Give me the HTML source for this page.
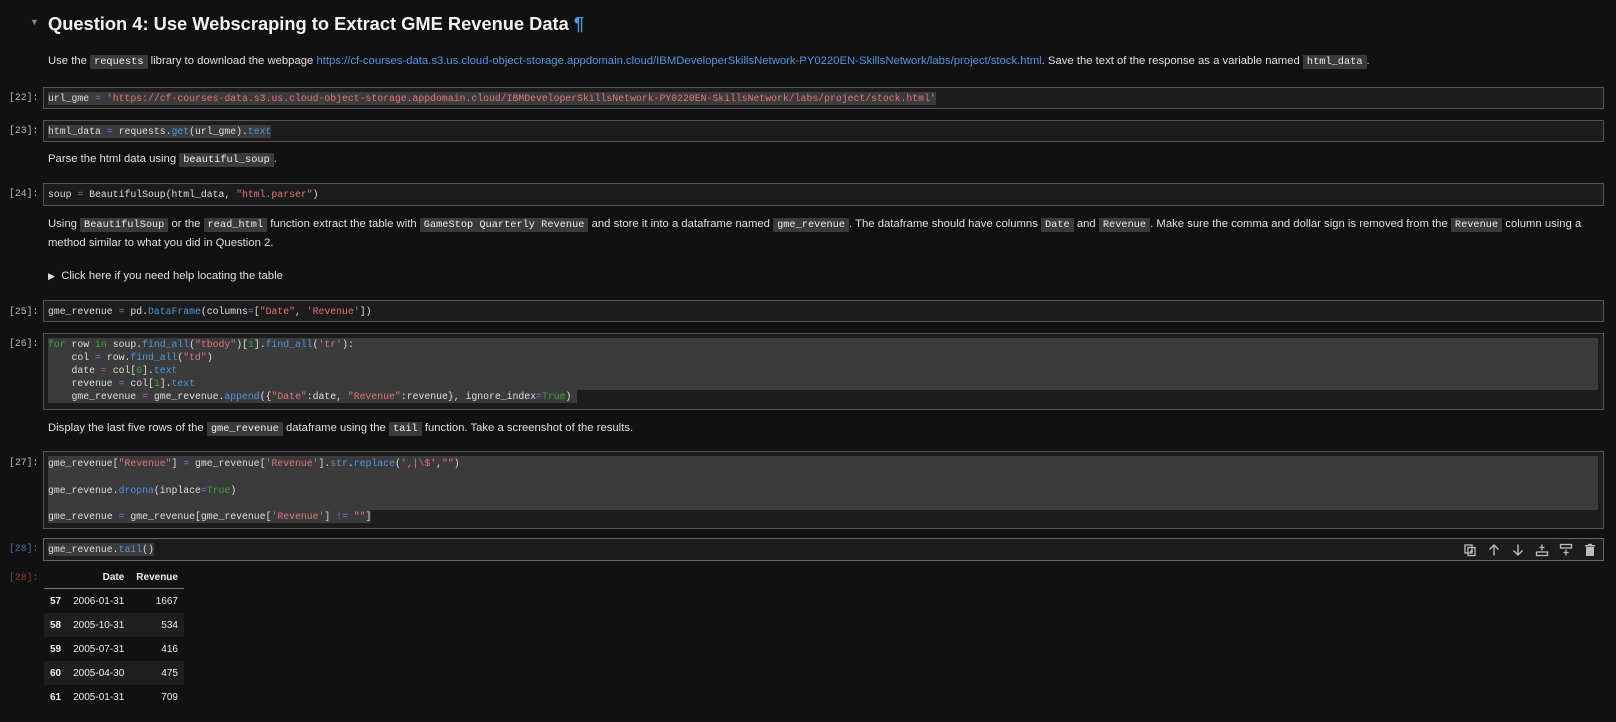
<!DOCTYPE html>
<html><head><meta charset="utf-8"><style>
html,body{margin:0;padding:0;background:#111111;width:1616px;height:722px;overflow:hidden;color:#e0e0e0;font-family:"Liberation Sans",sans-serif;}
.a{position:absolute;white-space:pre;}
.t{font-size:11.3px;line-height:16px;}
.ic{background:#3a3a3a;padding:1px 4px;font-family:"Liberation Mono",monospace;font-size:10.3px;color:#eee;}
.box{position:absolute;left:43px;width:1561px;border:1px solid #555;background:#1c1c1c;box-sizing:border-box;}
.lbl{position:absolute;left:9px;font-family:"Liberation Mono",monospace;font-size:9.8px;color:#bbb;}
.ln{position:absolute;left:4px;height:13px;line-height:13px;font-family:"Liberation Mono",monospace;font-size:9.8px;color:#ddd;white-space:pre;}
.hl{background:#3b3b3b;}
.s{color:#e0757a}.o{color:#a55fd6}.b{color:#4f96de}.g{color:#3ea43e}
a{color:#4f96de;text-decoration:none}
table{position:absolute;left:44px;top:566px;border-collapse:collapse;font-size:10px;color:#eee;}
td,th{padding:0 6px;height:24px;text-align:right;}
th{font-weight:bold;height:22px;border-bottom:1px solid #777;}
tr.st td{background:#1f1f1f}
.icn{position:absolute;top:4px;width:14px;height:14px;}
</style></head><body>
<div class="a" style="left:30px;top:17px;color:#888;font-size:9px;">▼</div>
<div class="a" style="left:48px;top:13px;font-size:18.3px;font-weight:bold;color:#f2f2f2;">Question 4: Use Webscraping to Extract GME Revenue Data <span style="color:#4f96de">¶</span></div>
<div class="a t" style="left:48px;top:53px;">Use the <span class="ic">requests</span> library to download the webpage <a>https://cf-courses-data.s3.us.cloud-object-storage.appdomain.cloud/IBMDeveloperSkillsNetwork-PY0220EN-SkillsNetwork/labs/project/stock.html</a>. Save the text of the response as a variable named <span class="ic">html_data</span>.</div>

<div class="lbl" style="top:92px">[22]:</div>
<div class="box" style="top:87px;height:22px"><div class="ln hl" style="top:4px">url_gme <span class="o">=</span> <span class="s">'https://cf-courses-data.s3.us.cloud-object-storage.appdomain.cloud/IBMDeveloperSkillsNetwork-PY0220EN-SkillsNetwork/labs/project/stock.html'</span></div></div>

<div class="lbl" style="top:125px">[23]:</div>
<div class="box" style="top:120px;height:22px"><div class="ln hl" style="top:4px">html_data <span class="o">=</span> requests.<span class="b">get</span>(url_gme).<span class="b">text</span></div></div>

<div class="a t" style="left:48px;top:151px;">Parse the html data using <span class="ic">beautiful_soup</span>.</div>

<div class="lbl" style="top:188px">[24]:</div>
<div class="box" style="top:183px;height:23px"><div class="ln" style="top:4px">soup <span class="o">=</span> BeautifulSoup(html_data, <span class="s">"html.parser"</span>)</div></div>

<div class="a t" style="left:48px;top:216px;">Using <span class="ic">BeautifulSoup</span> or the <span class="ic">read_html</span> function extract the table with <span class="ic">GameStop Quarterly Revenue</span> and store it into a dataframe named <span class="ic">gme_revenue</span>. The dataframe should have columns <span class="ic">Date</span> and <span class="ic">Revenue</span>. Make sure the comma and dollar sign is removed from the <span class="ic">Revenue</span> column using a</div>
<div class="a t" style="left:48px;top:235px;">method similar to what you did in Question 2.</div>
<div class="a t" style="left:48px;top:268px;"><span style="font-size:9px">▶</span>  Click here if you need help locating the table</div>

<div class="lbl" style="top:306px">[25]:</div>
<div class="box" style="top:300px;height:22px"><div class="ln" style="top:4px">gme_revenue <span class="o">=</span> pd.<span class="b">DataFrame</span>(columns<span class="o">=</span>[<span class="s">"Date"</span>, <span class="s">'Revenue'</span>])</div></div>

<div class="lbl" style="top:338px">[26]:</div>
<div class="box" style="top:333px;height:77px">
<div style="position:absolute;left:4px;top:4px;width:1550px;height:52px;background:#3b3b3b"></div>
<div class="ln" style="top:4px"><span class="g">for</span> row <span class="g">in</span> soup.<span class="b">find_all</span>(<span class="s">"tbody"</span>)[<span class="g">1</span>].<span class="b">find_all</span>(<span class="s">'tr'</span>):</div>
<div class="ln" style="top:17px">    col <span class="o">=</span> row.<span class="b">find_all</span>(<span class="s">"td"</span>)</div>
<div class="ln" style="top:30px">    date <span class="o">=</span> col[<span class="g">0</span>].<span class="b">text</span></div>
<div class="ln" style="top:43px">    revenue <span class="o">=</span> col[<span class="g">1</span>].<span class="b">text</span></div>
<div class="ln hl" style="top:56px">    gme_revenue <span class="o">=</span> gme_revenue.<span class="b">append</span>({<span class="s">"Date"</span>:date, <span class="s">"Revenue"</span>:revenue}, ignore_index<span class="o">=</span><span class="g">True</span>) </div>
</div>

<div class="a t" style="left:48px;top:420px;">Display the last five rows of the <span class="ic">gme_revenue</span> dataframe using the <span class="ic">tail</span> function. Take a screenshot of the results.</div>

<div class="lbl" style="top:457px">[27]:</div>
<div class="box" style="top:451px;height:78px">
<div style="position:absolute;left:4px;top:4px;width:1550px;height:54px;background:#3b3b3b"></div>
<div class="ln" style="top:5px">gme_revenue[<span class="s">"Revenue"</span>] <span class="o">=</span> gme_revenue[<span class="s">'Revenue'</span>].<span class="b">str</span>.<span class="b">replace</span>(<span class="s">',|\$'</span>,<span class="s">""</span>)</div>
<div class="ln" style="top:32px">gme_revenue.<span class="b">dropna</span>(inplace<span class="o">=</span><span class="g">True</span>)</div>
<div class="ln hl" style="top:58px">gme_revenue <span class="o">=</span> gme_revenue[gme_revenue[<span class="s">'Revenue'</span>] <span class="o">!=</span> <span class="s">""</span>]</div>
</div>

<div class="lbl" style="top:543px;color:#3f6fb0">[28]:</div>
<div class="box" style="top:538px;height:23px;border-color:#666">
<div class="ln hl" style="top:4px">gme_revenue.<span class="b">tail</span>()</div>
<svg class="icn" style="left:1419px" viewBox="0 0 14 14" fill="none" stroke="#bbb" stroke-width="1.3"><rect x="2" y="2" width="7" height="8"/><rect x="5" y="4.5" width="7" height="8"/><path d="M8.5 7v3M7 8.5h3"/></svg>
<svg class="icn" style="left:1443px" viewBox="0 0 14 14" fill="none" stroke="#bbb" stroke-width="1.4"><path d="M7 12.5V2M2.5 6.5L7 2l4.5 4.5"/></svg>
<svg class="icn" style="left:1467px" viewBox="0 0 14 14" fill="none" stroke="#bbb" stroke-width="1.4"><path d="M7 1.5V12M2.5 7.5L7 12l4.5-4.5"/></svg>
<svg class="icn" style="left:1491px" viewBox="0 0 14 14" fill="none" stroke="#bbb" stroke-width="1.3"><rect x="1.5" y="9" width="11" height="3.5"/><path d="M7 1.5v6M4.5 4.5h5"/></svg>
<svg class="icn" style="left:1515px" viewBox="0 0 14 14" fill="none" stroke="#bbb" stroke-width="1.3"><rect x="1.5" y="1.5" width="11" height="3.5"/><path d="M7 6.5v6M4.5 9.5h5"/></svg>
<svg class="icn" style="left:1539px" viewBox="0 0 14 14" fill="#bbb"><rect x="2" y="2" width="10" height="1.5"/><rect x="5" y="0.8" width="4" height="1.5"/><rect x="3" y="4" width="8" height="9"/></svg>
</div>
<div class="lbl" style="top:572px;color:#8a3b2b">[28]:</div>
<table>
<tr><th></th><th>Date</th><th>Revenue</th></tr>
<tr><td><b>57</b></td><td>2006-01-31</td><td>1667</td></tr>
<tr class="st"><td><b>58</b></td><td>2005-10-31</td><td>534</td></tr>
<tr><td><b>59</b></td><td>2005-07-31</td><td>416</td></tr>
<tr class="st"><td><b>60</b></td><td>2005-04-30</td><td>475</td></tr>
<tr><td><b>61</b></td><td>2005-01-31</td><td>709</td></tr>
</table>
</body></html>
